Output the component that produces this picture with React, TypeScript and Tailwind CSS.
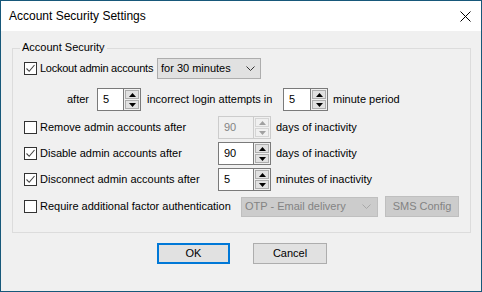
import React from "react";

const font = { fontFamily: '"Liberation Sans", Arial, sans-serif' };

function CheckBox({ checked }: { checked: boolean }) {
  return (
    <span className="w-[13px] h-[13px] border border-[#333333] bg-white flex items-center justify-center shrink-0">
      {checked && (
        <svg width="11" height="11" viewBox="0 0 11 11">
          <path d="M1.5 5.5 L4.2 8.3 L9.5 2" fill="none" stroke="#444" strokeWidth="1.1" />
        </svg>
      )}
    </span>
  );
}

function Tri({ up, color }: { up: boolean; color: string }) {
  return (
    <svg width="7" height="4" viewBox="0 0 7 4">
      {up ? <path d="M0 4 L3.5 0 L7 4 Z" fill={color} /> : <path d="M0 0 L3.5 4 L7 0 Z" fill={color} />}
    </svg>
  );
}

function Spinner({ value, width, disabled }: { value: string; width: string; disabled?: boolean }) {
  return (
    <div className={`flex h-[23px] ${width} shrink-0`}>
      <div
        className={`flex-1 flex items-center pl-[5px] border ${
          disabled ? "border-[#cccccc] bg-[#f0f0f0] text-[#838383]" : "border-[#7a7a7a] bg-white text-black"
        }`}
      >
        {value}
      </div>
      <div className={`w-[17px] flex flex-col border-y border-r ${disabled ? "border-[#cccccc]" : "border-[#7a7a7a]"} bg-[#f0f0f0] p-[1px] gap-[1px]`}>
        <div className={`flex-1 flex items-center justify-center border ${disabled ? "border-[#d5d5d5] bg-[#f0f0f0]" : "border-[#adadad] bg-[#e1e1e1]"}`}>
          <Tri up color={disabled ? "#a0a0a0" : "#000"} />
        </div>
        <div className={`flex-1 flex items-center justify-center border ${disabled ? "border-[#d5d5d5] bg-[#f0f0f0]" : "border-[#adadad] bg-[#e1e1e1]"}`}>
          <Tri up={false} color={disabled ? "#a0a0a0" : "#000"} />
        </div>
      </div>
    </div>
  );
}

function Chevron({ color }: { color: string }) {
  return (
    <svg width="9" height="5" viewBox="0 0 9 5">
      <path d="M0.5 0.5 L4.5 4.5 L8.5 0.5" fill="none" stroke={color} strokeWidth="1" />
    </svg>
  );
}

export default function App() {
  return (
    <div
      className="w-[482px] h-[292px] border border-[#17587a] bg-[#f0f0f0] flex flex-col text-[11px] text-black leading-none whitespace-nowrap"
      style={font}
    >
      <div className="h-[30px] bg-white flex items-center justify-between pl-[8px] pr-[10px] shrink-0">
        <span className="text-[12px]">Account Security Settings</span>
        <svg width="11" height="11" viewBox="0 0 11 11">
          <path d="M0.5 0.5 L10.5 10.5 M10.5 0.5 L0.5 10.5" stroke="#000" strokeWidth="1" />
        </svg>
      </div>

      <div className="pl-[11px] pr-[10px] pt-[17px]">
        <div className="relative border border-[#dcdcdc] h-[185px] pl-[11px] pt-[9px]">
          <span className="absolute left-[7px] top-[-7px] px-[2px] bg-[#f0f0f0]">Account Security</span>

          <div className="flex items-center h-[21px]">
            <CheckBox checked />
            <span className="ml-[3px] w-[117px] tracking-[-0.25px]">Lockout admin accounts</span>
            <div className="w-[104px] h-[21px] border border-[#adadad] bg-[#e1e1e1] flex items-center justify-between pl-[3px] pr-[5px]">
              <span>for 30 minutes</span>
              <Chevron color="#333" />
            </div>
          </div>

          <div className="flex items-center h-[23px] mt-[9px]">
            <span className="ml-[43px] w-[30px]">after</span>
            <Spinner value="5" width="w-[44px]" />
            <span className="ml-[6px] w-[136px]">incorrect login attempts in</span>
            <Spinner value="5" width="w-[45px]" />
            <span className="ml-[5px]">minute period</span>
          </div>

          <div className="flex items-center h-[23px] mt-[5px]">
            <CheckBox checked={false} />
            <span className="ml-[3px] w-[178px]">Remove admin accounts after</span>
            <Spinner value="90" width="w-[53px]" disabled />
            <span className="ml-[5px]">days of inactivity</span>
          </div>

          <div className="flex items-center h-[23px] mt-[3px]">
            <CheckBox checked />
            <span className="ml-[3px] w-[178px]">Disable admin accounts after</span>
            <Spinner value="90" width="w-[53px]" />
            <span className="ml-[5px]">days of inactivity</span>
          </div>

          <div className="flex items-center h-[23px] mt-[3px]">
            <CheckBox checked />
            <span className="ml-[3px] w-[178px]">Disconnect admin accounts after</span>
            <Spinner value="5" width="w-[53px]" />
            <span className="ml-[5px]">minutes of inactivity</span>
          </div>

          <div className="flex items-center h-[21px] mt-[5px]">
            <CheckBox checked={false} />
            <span className="ml-[3px] w-[201px]">Require additional factor authentication</span>
            <div className="w-[137px] h-[20px] border border-[#bfbfbf] bg-[#cccccc] text-[#838383] flex items-center justify-between pl-[3px] pr-[6px]">
              <span>OTP - Email delivery</span>
              <Chevron color="#a8a8a8" />
            </div>
            <div className="ml-[7px] w-[74px] h-[21px] border border-[#bfbfbf] bg-[#cccccc] text-[#838383] flex items-center justify-center">
              SMS Config
            </div>
          </div>
        </div>
      </div>

      <div className="flex pl-[156px] pt-[10px] gap-[23px]">
        <button className="w-[73px] h-[21px] border-2 border-[#0078d7] bg-[#e1e1e1] flex items-center justify-center">
          OK
        </button>
        <button className="w-[74px] h-[21px] border border-[#adadad] bg-[#e1e1e1] flex items-center justify-center">
          Cancel
        </button>
      </div>
    </div>
  );
}
